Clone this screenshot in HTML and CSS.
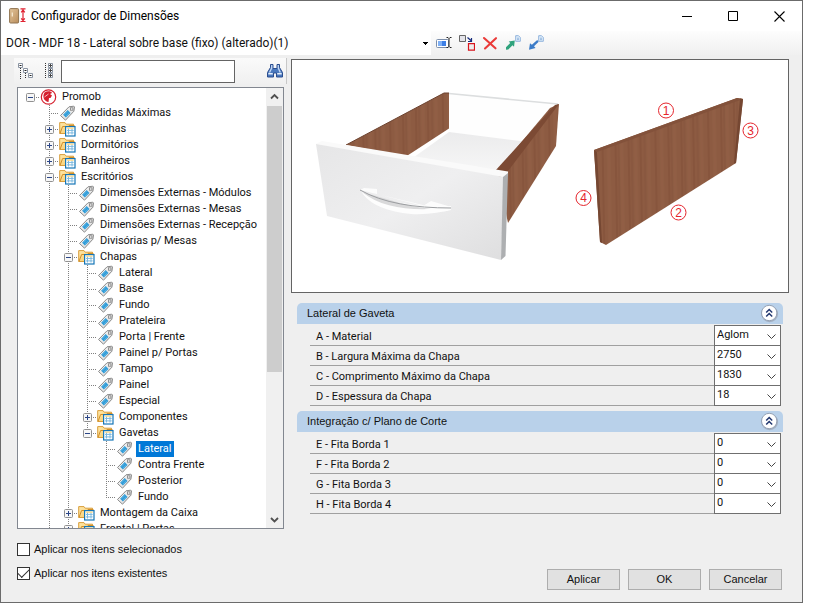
FILE: index.html
```html
<!DOCTYPE html>
<html lang="pt-BR">
<head>
<meta charset="utf-8">
<title>Configurador de Dimensões</title>
<meta name="viewport" content="width=device-width, initial-scale=1">
<link rel="stylesheet" href="styles.css">
</head>
<body>
<svg class="defs" aria-hidden="true">
  <defs>
    <linearGradient id="folderFill" x1="0" y1="0" x2="1" y2="1"><stop offset="0" stop-color="#ffe9ac"/><stop offset="1" stop-color="#f5c662"/></linearGradient>
    <linearGradient id="tagFill" x1="0" y1="0" x2="1" y2="1"><stop offset="0" stop-color="#ffffff"/><stop offset="1" stop-color="#d4d4d4"/></linearGradient>
    <symbol id="i-tag" viewBox="0 0 16 16">
      <path d="M1 10.5 9.5 1.8 14.3 1.2 15 1.9 14.4 6.2 6 15.2Z" fill="url(#tagFill)" stroke="#8a8a8a" stroke-width="1"/>
      <path d="M3.6 9.8 8.2 5.1 11 7.9 6.4 12.6Z" fill="#2f9ad6"/>
      <path d="m5 9.8 3.4-3.4M6.4 11.2 9.8 7.8" stroke="#5bb8e8" stroke-width=".8" fill="none"/>
      <rect x="11" y="2.8" width="2.4" height="2.4" fill="#f4f4f4" stroke="#888" stroke-width=".9"/>
    </symbol>
    <symbol id="i-folder" viewBox="0 0 17 16">
      <path d="M.7 12.5V1.6H6l1.2 1.6h7.3v9.3z" fill="url(#folderFill)" stroke="#d99e3c"/>
      <path d="M1 12.5 3.6 5.5H9L10 4.5h5.5" fill="none" stroke="#d08f2a"/>
      <rect x="6.6" y="5.6" width="9.4" height="9.4" fill="#fff" stroke="#1677b8" stroke-width="1.2"/>
      <path d="M9.5 7.5v6M13 7.5v6M8 9.4h6.7M8 11.9h6.7" stroke="#7cb9df" stroke-width="1"/>
      <path d="M8 7.1h6.7" stroke="#ffd166"/>
    </symbol>
    <symbol id="i-arrowdoc" viewBox="0 0 16 16">
      <path d="M1 12.2 5.2 8 3.7 6.4 9.8 5.6 9 11.7 7.5 10.2 3.3 14.6 1 14.7z" fill="#2fa37c"/>
      <path d="M10.7.7h2.8l1.8 1.8v3.8h-4.6z" fill="#e3effb" stroke="#86add9" stroke-width=".9"/><path d="M12 3.2h2M12 4.7h2" stroke="#7ca6d6" stroke-width=".8"/>
    </symbol>
    <symbol id="i-docarrow" viewBox="0 0 16 16">
      <path d="M9.2 4.9 10.7 6.8 6 11.2 7.6 13 1 14.7 2 8.3 3.9 9.7z" fill="#3c7cc8"/>
      <path d="M10.7.7h2.8l1.8 1.8v3.8h-4.6z" fill="#e3effb" stroke="#86add9" stroke-width=".9"/><path d="M12 3.2h2M12 4.7h2" stroke="#7ca6d6" stroke-width=".8"/>
    </symbol>
    <symbol id="i-collapse" viewBox="0 0 19 19">
      <circle cx="9.7" cy="9.9" r="8.4" fill="#a3b0c2"/>
      <circle cx="9.2" cy="9" r="7.7" fill="#fff" stroke="#93a1b5"/>
      <path d="m6.2 8.5 3-3 3 3M6.2 12.5l3-3 3 3" fill="none" stroke="#22376f" stroke-width="1.5"/>
    </symbol>
  </defs>
</svg>

<main class="window">
  <header class="titlebar">
    <svg class="app-icon" width="17" height="16" viewBox="0 0 17 16" aria-hidden="true">
      <defs><linearGradient id="door" x1="0" y1="0" x2="1" y2="1"><stop offset="0" stop-color="#e3c59c"/><stop offset="1" stop-color="#b98d5b"/></linearGradient></defs>
      <rect x=".6" y=".6" width="9" height="14.400" rx="1" fill="url(#door)" stroke="#8f7350"/>
      <path d="M3.300 4.500v4" stroke="#f8ecd6" stroke-width="1.200"/>
      <path d="M11.500.9h5M11.500 13.500h5M14 1.500v11.500M12.200 4.300 14 2l1.800 2.300M12.200 10.300l1.800 2.300 1.800-2.300" stroke="#e02231" stroke-width="1.200" fill="none"/>
    </svg>
    <h1>Configurador de Dimensões</h1>
    <div class="window-controls">
      <button type="button" aria-label="Minimizar"><svg width="11" height="11" viewBox="0 0 11 11"><path d="M0 5.500h10" stroke="#000"/></svg></button>
      <button type="button" aria-label="Maximizar"><svg width="11" height="11" viewBox="0 0 11 11"><path d="M.5.5h9v9h-9z" stroke="#000" fill="none"/></svg></button>
      <button type="button" aria-label="Fechar"><svg width="11" height="11" viewBox="0 0 11 11"><path d="m.5.5 10 10m0-10-10 10" stroke="#000" stroke-width="1.100"/></svg></button>
    </div>
  </header>

  <div class="toolbar">
    <select class="preset" aria-label="Configuração"><option>DOR - MDF 18 - Lateral sobre base (fixo) (alterado)(1)</option></select>
    <button type="button" aria-label="Renomear"><svg width="16" height="16" viewBox="0 0 16 16"><rect x=".5" y="4.500" width="12" height="8" rx="1" fill="#fff" stroke="#7d8fab"/><path d="M2 6h8v5H2z" fill="#3d7fe6"/><path d="M2 6h4v5H2z" fill="#7fb0f5"/><path d="M10.500 2.500h1.500l1 1 1-1h1.500M13 3.500v8M10.500 12.500h1.500l1-1 1 1h1.500" stroke="#222" fill="none"/></svg></button>
    <button type="button" aria-label="Substituir"><svg width="16" height="16" viewBox="0 0 16 16"><path d="M.5.5h6v6h-6z" fill="#e4e4ea" stroke="#666"/><path d="m8.500 2.500 4 3.500M12.500 3v3.500H9" stroke="#182d7d" stroke-width="1.200" fill="none"/><path d="M9.500 8.700h6v6.500h-6z" fill="#eee" stroke="#d8141c" stroke-width="1.200"/></svg></button>
    <button type="button" aria-label="Excluir"><svg width="16" height="16" viewBox="0 0 16 16"><path d="m2 3 11.500 10.300M14 3.200 3 13.500" stroke="#ea3a38" stroke-width="2.100" stroke-linecap="round"/></svg></button>
    <button type="button" aria-label="Exportar"><svg width="16" height="16"><use href="#i-arrowdoc"/></svg></button>
    <button type="button" aria-label="Importar"><svg width="16" height="16"><use href="#i-docarrow"/></svg></button>
  </div>

  <div class="content">
    <section class="sidebar">
      <div class="searchbar">
        <button type="button" aria-label="Recolher tudo"><svg width="16" height="16" viewBox="0 0 16 16"><path d="M2.500 5v11M7.500 10v6" stroke="#333" stroke-dasharray="1 1"/><path d="M.5.5h4v4h-4zM5.500 5.500h4v4h-4zM10.500 10.500h4v4h-4z" fill="#fff" stroke="#8b95a3"/><path d="M1.500 2.500h2M6.500 7.500h2M11.500 12.500h2" stroke="#222"/></svg></button>
        <button type="button" aria-label="Expandir tudo"><svg width="16" height="16" viewBox="0 0 16 16"><path d="M4.500 0v16" stroke="#333" stroke-dasharray="1 1"/><path d="M7.500.5h4v4h-4zM7.500 5.500h4v4h-4zM7.500 10.500h4v4h-4z" fill="#fff" stroke="#8b95a3"/><path d="M8 2.500h3M9.500 1v3M8 7.500h3M9.500 6v3M8 12.500h3M9.500 11v3" stroke="#444"/></svg></button>
        <input type="text" aria-label="Pesquisar">
        <button type="button" class="find" aria-label="Localizar"><svg width="16" height="16" viewBox="0 0 16 16"><path d="M3.500 1.500h2.500v4h4v-4h2.500v3l3 5v4.500H9.500v-4h-3v4H.5V9.500l3-5z" fill="#4a78bd" stroke="#2a4d8e"/><path d="M4.700 2v3L2.500 9.500M11.300 2v3l2 4.500" stroke="#c3d8f5" stroke-width="1.300" fill="none"/><path d="M1.300 10.800h4.500M10.200 10.800h4.500" stroke="#e2ecfa" stroke-width="1.500"/></svg></button>
      </div>
      <div class="tree-box">
        <div class="tree-view" id="tree"></div>
        <div class="scrollbar" aria-hidden="true">
          <svg width="17" height="17" viewBox="0 0 17 17"><path d="m5 10.500 3.500-3.500 3.500 3.500" fill="none" stroke="#505050" stroke-width="1.800"/></svg>
          <div class="thumb"></div>
          <div class="track"></div>
          <svg width="17" height="17" viewBox="0 0 17 17"><path d="m5 7 3.500 3.500 3.500-3.500" fill="none" stroke="#505050" stroke-width="1.800"/></svg>
        </div>
      </div>
      <div class="options">
        <label><input type="checkbox">Aplicar nos itens selecionados</label>
        <label><input type="checkbox" checked>Aplicar nos itens existentes</label>
      </div>
    </section>

    <section class="details">
      <svg class="preview" viewBox="0 0 496 232" role="img" aria-label="Gaveta e lateral com bordas numeradas">
        <defs>
          <linearGradient id="front" x1="0" y1="0" x2="1" y2="1"><stop offset="0" stop-color="#e6e6e7"/><stop offset=".5" stop-color="#efeff0"/><stop offset="1" stop-color="#dededf"/></linearGradient>
          <linearGradient id="floor" x1="0" y1="0" x2="0" y2="1"><stop offset="0" stop-color="#ebebec"/><stop offset="1" stop-color="#f8f8f8"/></linearGradient>
          <pattern id="wood" width="53" height="300" patternUnits="userSpaceOnUse" patternTransform="rotate(-1)">
            <rect width="53" height="300" fill="#8d5b42"/>
            <path d="M4 0v300M17 0v300M29 0v300M44 0v300" stroke="#87553d" stroke-width="2"/>
            <path d="M10 0v300M24 0v300M37 0v300M50 0v300" stroke="#946147" stroke-width="3" opacity=".6"/>
            <path d="M7 0v300M20 0v300M33 0v300" stroke="#825039" stroke-width="1" opacity=".6"/>
          </pattern>
        </defs>
        <path d="M157 33.500 266 45l-30 37-79-10z" fill="#fefefe"/>
        <path d="m157 33.500 109 10.500" stroke="#dcdedf" stroke-width="1.500"/>
        <path d="m157 72 79 10-30 34-88-16z" fill="url(#floor)"/>
        <path d="M54 85 152 33h5v35.500l-43 28z" fill="url(#wood)"/>
        <path d="m54 85 98-52h5" fill="none" stroke="#6d4330"/>
        <path d="M205 111 258 48l9-4-3 42-48 77z" fill="url(#wood)"/>
        <path d="m203 111 60-66 4-1-51 67-4 5z" fill="#7c4a34"/>
        <path d="m24 84 6-3 186 30.500v4l-4 2z" fill="#fafafa"/>
        <path d="M24 84 212 117 209 200 35 156z" fill="url(#front)"/>
        <path d="m211 117 5-4-2.500 83-4.500 4z" fill="#adafb1"/>
        <path d="m68 130 4-2 13 1v5l46 12 8-5 17 5v5z" fill="#fcfcfc"/>
        <path d="M69 131c8 14 28 21 50 23 16 1 31-2 40-4v-4c-31 2-65-4-90-15z" fill="#fdfdfd"/>
        <path d="M70 132c17 14 41 18 69 17l-20-3z" fill="#d9d9da"/>
        <path d="M68 130c23 13 54 18 91 18" fill="none" stroke="#9b9da0" stroke-width="1"/>
        <path d="m302 90 143-52 6 1-7 64-130 82-6-3z" fill="url(#wood)"/>
        <path d="m302 90 143-52 6 1-146 53z" fill="#83523b"/>
        <path d="m302 90 3 2 5 91-2-1zM451 39l-3-.5-6 65 2-.5z" fill="#754732"/>
        <g class="marks">
          <circle cx="374" cy="50.500" r="7.500"/><circle cx="386.500" cy="152.500" r="7.500"/><circle cx="458.500" cy="70.500" r="7.500"/><circle cx="291.500" cy="138" r="7.500"/>
          <text x="374" y="55">1</text><text x="386.500" y="157">2</text><text x="458.500" y="75">3</text><text x="291.500" y="142">4</text>
        </g>
      </svg>

      <div class="groups">
        <section class="group">
          <header><h2>Lateral de Gaveta</h2><button type="button" aria-label="Recolher Lateral de Gaveta"><svg width="19" height="19"><use href="#i-collapse"/></svg></button></header>
          <div class="fields">
            <div class="field"><label for="fa">A - Material</label><select id="fa"><option>Aglom</option></select></div>
            <div class="field"><label for="fb">B - Largura Máxima da Chapa</label><select id="fb"><option>2750</option></select></div>
            <div class="field"><label for="fc">C - Comprimento Máximo da Chapa</label><select id="fc"><option>1830</option></select></div>
            <div class="field"><label for="fd">D - Espessura da Chapa</label><select id="fd"><option>18</option></select></div>
          </div>
        </section>
        <section class="group">
          <header><h2>Integração c/ Plano de Corte</h2><button type="button" aria-label="Recolher Integração c/ Plano de Corte"><svg width="19" height="19"><use href="#i-collapse"/></svg></button></header>
          <div class="fields">
            <div class="field"><label for="fe">E - Fita Borda 1</label><select id="fe"><option>0</option></select></div>
            <div class="field"><label for="ff">F - Fita Borda 2</label><select id="ff"><option>0</option></select></div>
            <div class="field"><label for="fg">G - Fita Borda 3</label><select id="fg"><option>0</option></select></div>
            <div class="field"><label for="fh">H - Fita Borda 4</label><select id="fh"><option>0</option></select></div>
          </div>
        </section>
      </div>

      <footer class="actions">
        <button type="button">Aplicar</button>
        <button type="button">OK</button>
        <button type="button">Cancelar</button>
      </footer>
    </section>
  </div>
</main>
<script src="tree.js"></script>
</body>
</html>
```
FILE: styles.css
```css
* { box-sizing: border-box; }
body {
  margin: 0;
  padding: 0 11px 8px 0;
  min-height: 100vh;
  display: flex;
  background: #fff;
  color: #111;
  font: 11px/16px Roboto, "Liberation Sans", Arial, sans-serif;
}
button, input, select { font: inherit; color: inherit; margin: 0; }
svg { display: block; flex: none; }
.defs { position: absolute; width: 0; height: 0; }
h1, h2 { margin: 0; font-weight: normal; font-size: inherit; }
ul { list-style: none; margin: 0; padding: 0; }

.window {
  flex: 1;
  min-width: 0;
  display: flex;
  flex-direction: column;
  border: 1px solid #6b6b6b;
  background: #efefef;
}

.titlebar { display: flex; align-items: center; height: 30px; padding-left: 8px; background: #fff; }
.titlebar h1 { flex: 1; padding-left: 5px; font-size: 12px; color: #000; }
.window-controls { display: flex; }
.window-controls button { width: 46px; height: 30px; padding: 0; display: grid; place-items: center; border: 0; background: none; }

.toolbar { display: flex; align-items: center; height: 24px; background: linear-gradient(#fdfdfd, #f0f0f0); }
.toolbar button { width: 23px; height: 24px; padding: 0; display: grid; place-items: center; border: 0; background: none; }
.preset {
  appearance: none;
  width: 430px;
  height: 24px;
  margin-right: 1px;
  padding: 0 5px;
  border: 0;
  border-radius: 0;
  background: linear-gradient(#000, #000) right 3px top 11px / 5px 1px no-repeat,
    linear-gradient(#000, #000) right 4px top 12px / 3px 1px no-repeat,
    linear-gradient(#000, #000) right 5px top 13px / 1px 1px no-repeat, #fff;
  font-size: 12px;
}

.content { flex: 1; display: grid; grid-template-columns: 273px minmax(0, 1fr); gap: 4px; padding: 3px 13px 12px 13px; }
.sidebar { display: flex; flex-direction: column; min-width: 0; }
.searchbar { display: flex; align-items: center; height: 26px; background: linear-gradient(#fafafa, #f0f0f0); border-right: 1px solid #c8c8c8; }
.searchbar button { width: 23px; height: 24px; padding: 0; display: grid; place-items: center; border: 0; background: none; }
.searchbar input { width: 174px; height: 23px; margin-left: 1px; padding: 0 4px; border: 1px solid #646464; background: #fff; }
.searchbar .find { margin-left: auto; }

.tree-box { display: flex; height: 442px; margin: 3px 3px 0; border: 1px solid #828790; background: #fff; }
.tree-view { flex: 1; min-width: 0; overflow: hidden; padding: 1px 0 0 3px; }
.tree ul { padding-left: 19px; }
.tree li { background: repeating-linear-gradient(#808080 0 1px, transparent 1px 2px) 9px 0 / 1px 100% no-repeat; }
.tree li:last-child { background-size: 1px 9px; }
.tree > li, .tree > li:last-child { background: none; }
.tree li.continues:last-child { background-size: 1px 100%; }
.row { display: flex; align-items: center; height: 16px; white-space: nowrap; }
.twig { flex: none; width: 19px; height: 16px; padding: 0; display: flex; align-items: center; border: 0; background: repeating-linear-gradient(90deg, #808080 0 1px, transparent 1px 2px) 9px 8px / 10px 1px no-repeat; }
.twig svg { margin-left: 5px; }
.label { margin-left: 3px; padding: 0 2px; line-height: 16px; }
.selected .label { background: #0078d7; color: #fff; }
.scrollbar { width: 17px; display: flex; flex-direction: column; background: #f0f0f0; }
.thumb { flex: 267; margin: 1px 1px 0; background: #cdcdcd; }
.track { flex: 140; }

.options { display: flex; flex-direction: column; gap: 8px; padding: 12px 3px 0; }
.options label { display: flex; align-items: center; gap: 4px; }
.options label, .group h2, .actions button { font-family: "Liberation Sans", Arial, sans-serif; }
.options input { appearance: none; width: 13px; height: 13px; border: 1px solid #333; background: #fff; display: grid; place-items: center; }
.options input:checked::before { content: ""; width: 10px; height: 5px; border: solid #333; border-width: 0 0 1px 1px; transform: translateY(-1px) rotate(-45deg); }

.details { display: flex; flex-direction: column; min-width: 0; }
.preview { width: 100%; border: 1px solid #646464; background: #fff; margin-top: 1px; }
.marks circle { fill: #fff; stroke: #e5252c; stroke-width: 1; }
.marks text { fill: #e5252c; font: 12px "Liberation Sans", Arial, sans-serif; text-anchor: middle; }

.groups { display: flex; flex-direction: column; gap: 5px; padding: 10px 6px 0; }
.group header { display: flex; align-items: center; height: 21px; padding: 0 4px 0 10px; background: #b9d1ea; border-radius: 5px 5px 0 0; }
.group h2 { flex: 1; padding-bottom: 1px; }
.group header button { padding: 0; border: 0; background: none; }
.fields { margin: 2px 2px 0 13px; }
.field { display: flex; height: 20px; }
.field label { flex: 1; padding: 3px 6px 0; border-bottom: 1px solid #a0a0a0; }
.field select {
  appearance: none;
  width: 67px;
  height: 21px;
  margin-top: -1px;
  padding: 0 2px 2px;
  border: 1px solid #6f6f6f;
  border-radius: 0;
  background: #fff url("data:image/svg+xml,%3Csvg xmlns='http://www.w3.org/2000/svg' width='9' height='6'%3E%3Cpath d='m.5.5 4 4 4-4' fill='none' stroke='%23444'/%3E%3C/svg%3E") right 4px top 8px no-repeat;
}

.actions { display: flex; justify-content: flex-end; gap: 8px; margin-top: auto; padding-right: 7px; }
.actions button { width: 73px; height: 21px; padding: 0 0 1px; border: 1px solid #adadad; background: #e1e1e1; }
```
FILE: tree.js
```js
const tag = (label, extra) => ({ label, icon: 'tag', ...extra });
const folder = (label, children, extra) => ({ label, icon: 'folder', toggle: true, children, ...extra });

const data = [{
  label: 'Promob', icon: 'brand', toggle: true, children: [
    tag('Medidas Máximas'),
    folder('Cozinhas'),
    folder('Dormitórios'),
    folder('Banheiros'),
    folder('Escritórios', [
      tag('Dimensões Externas - Módulos'),
      tag('Dimensões Externas - Mesas'),
      tag('Dimensões Externas - Recepção'),
      tag('Divisórias p/ Mesas'),
      folder('Chapas', [
        ...['Lateral', 'Base', 'Fundo', 'Prateleira', 'Porta | Frente', 'Painel p/ Portas', 'Tampo', 'Painel', 'Especial'].map(name => tag(name)),
        folder('Componentes'),
        folder('Gavetas', [
          tag('Lateral', { selected: true }),
          tag('Contra Frente'),
          tag('Posterior'),
          tag('Fundo'),
        ]),
      ]),
      folder('Montagem da Caixa'),
      folder('Frontal | Portas', null, { continues: true }),
    ], { continues: true }),
  ],
}];

const brand = '<svg width="17" height="16" viewBox="0 0 16 16"><circle cx="8" cy="8" r="7.2" fill="#fff" stroke="#d5202e" stroke-width="1.2"/><path d="M4 3.500C7 1.500 11 2.300 11.500 4L9.500 5l2 1.500L10 9H8.500l-.5 4C4 12.500 2.500 9 3 6z" fill="#d5202e"/><path d="m4 8 4-3" stroke="#fff" stroke-width=".7"/></svg>';

function twig(node) {
  if (!node.toggle) return '<span class="twig"></span>';
  const plus = node.children ? '' : 'M4.500 2v5';
  return `<button type="button" class="twig" aria-label="Alternar ${node.label}"><svg width="9" height="9" viewBox="0 0 9 9"><rect x=".5" y=".5" width="8" height="8" rx="1" fill="#f7f7f7" stroke="#919191"/><path d="M2 4.500h5${plus}" stroke="#2b4687"/></svg></button>`;
}

function render(nodes, root) {
  const items = nodes.map(node => {
    const icon = node.icon === 'brand' ? brand : `<svg width="17" height="16"><use href="#i-${node.icon}"/></svg>`;
    return `<li class="${node.continues ? 'continues' : ''}"><div class="row ${node.selected ? 'selected' : ''}">${twig(node)}${icon}<span class="label">${node.label}</span></div>${node.children ? render(node.children) : ''}</li>`;
  });
  return `<ul class="${root ? 'tree' : ''}">${items.join('')}</ul>`;
}

document.getElementById('tree').innerHTML = render(data, true);
```
